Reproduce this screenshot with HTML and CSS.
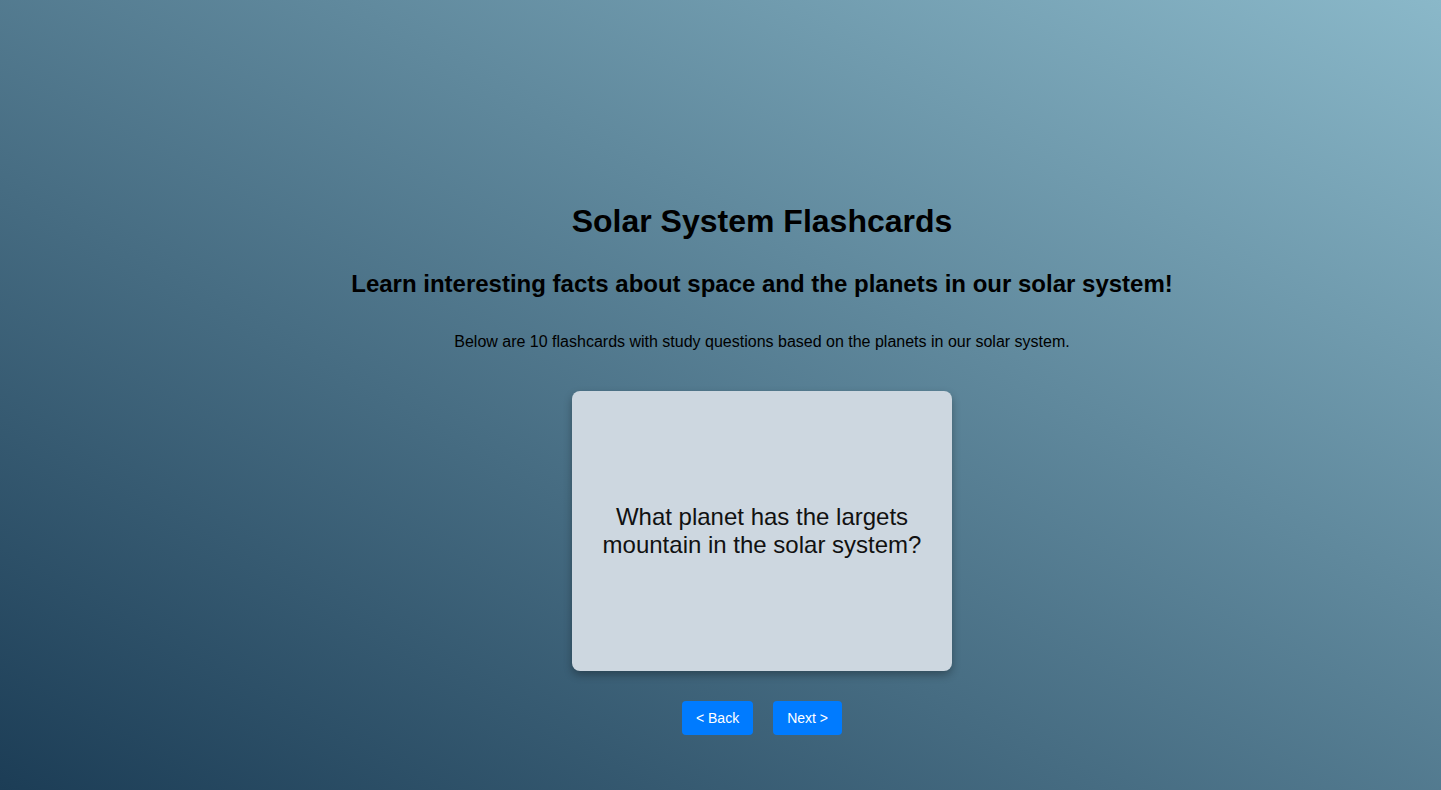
FILE: index.html
```html
<!DOCTYPE html>
<html lang="en">
<head>
<meta charset="utf-8">
<title>Solar System Flashcards</title>
<link rel="stylesheet" href="styles.css">
</head>
<body>
<main class="page">
  <h1 class="title">Solar System Flashcards</h1>
  <h2 class="subtitle">Learn interesting facts about space and the planets in our solar system!</h2>
  <p class="intro">Below are 10 flashcards with study questions based on the planets in our solar system.</p>
  <div class="card">
    <div class="card-text">What planet has the largets mountain in the solar system?</div>
  </div>
  <div class="controls">
    <button class="btn">&lt; Back</button>
    <button class="btn">Next &gt;</button>
  </div>
</main>
</body>
</html>
```

FILE: styles.css
```css
html, body {
  margin: 0;
  padding: 0;
  height: 100%;
}
body {
  font-family: "Liberation Sans", Arial, sans-serif;
  color: #000;
  background: linear-gradient(to top right, #1c3d56, #8ab8c9);
  min-height: 790px;
  overflow: hidden;
}
.page {
  display: flex;
  flex-direction: column;
  align-items: center;
  padding-top: 203px;
  padding-left: 83px;
}
.title {
  margin: 0;
  font-size: 32px;
  font-weight: bold;
  line-height: 37px;
}
.subtitle {
  margin: 30px 0 0;
  font-size: 24px;
  font-weight: bold;
  line-height: 28px;
}
.intro {
  margin: 35px 0 0;
  font-size: 16px;
  line-height: 18px;
}
.card {
  margin-top: 40px;
  width: 380px;
  height: 280px;
  box-sizing: border-box;
  padding: 20px;
  background: #cdd7e0;
  border-radius: 8px;
  box-shadow: 0 4px 8px rgba(0, 0, 0, 0.3);
  display: flex;
  align-items: center;
  justify-content: center;
  text-align: center;
}
.card-text {
  font-size: 24px;
  line-height: 28px;
  color: #111;
}
.controls {
  margin-top: 30px;
  display: flex;
  gap: 20px;
}
.btn {
  font-family: "Liberation Sans", Arial, sans-serif;
  font-size: 14px;
  line-height: 16px;
  height: 34px;
  padding: 9px 14px;
  box-sizing: border-box;
  border: none;
  border-radius: 4px;
  background: #007bff;
  color: #fff;
  cursor: pointer;
}
```
